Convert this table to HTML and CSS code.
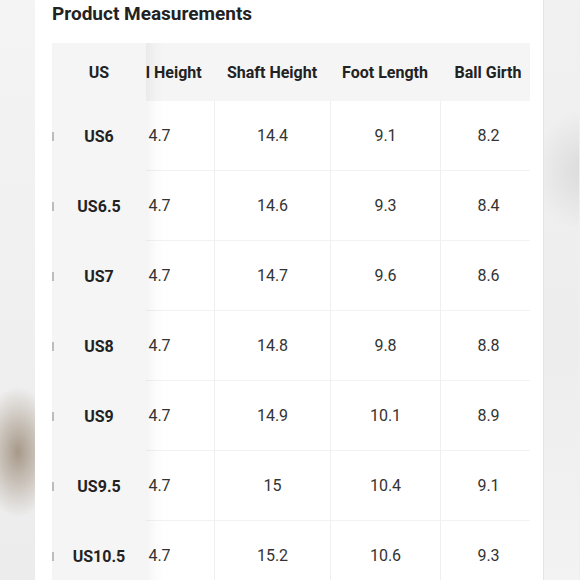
FILE: index.html
```html
<!DOCTYPE html>
<html>
<head>
<meta charset="utf-8">
<link rel="stylesheet" href="styles.css">
</head>
<body>
<div class="page">
  <div class="side side-left"></div>
  <div class="panel">
    <h2 class="title">Product Measurements</h2>
    <div class="table">
      <div class="cell head sticky">US</div>
      <div class="cell head heel"><span class="inner">Heel Height</span></div>
      <div class="cell head">Shaft Height</div>
      <div class="cell head">Foot Length</div>
      <div class="cell head ball">Ball Girth</div>

      <div class="cell sticky size">US6</div>
      <div class="cell heel"><span class="inner">4.7</span></div>
      <div class="cell line">14.4</div>
      <div class="cell line">9.1</div>
      <div class="cell line ball">8.2</div>

      <div class="cell sticky size">US6.5</div>
      <div class="cell heel"><span class="inner">4.7</span></div>
      <div class="cell line">14.6</div>
      <div class="cell line">9.3</div>
      <div class="cell line ball">8.4</div>

      <div class="cell sticky size">US7</div>
      <div class="cell heel"><span class="inner">4.7</span></div>
      <div class="cell line">14.7</div>
      <div class="cell line">9.6</div>
      <div class="cell line ball">8.6</div>

      <div class="cell sticky size">US8</div>
      <div class="cell heel"><span class="inner">4.7</span></div>
      <div class="cell line">14.8</div>
      <div class="cell line">9.8</div>
      <div class="cell line ball">8.8</div>

      <div class="cell sticky size">US9</div>
      <div class="cell heel"><span class="inner">4.7</span></div>
      <div class="cell line">14.9</div>
      <div class="cell line">10.1</div>
      <div class="cell line ball">8.9</div>

      <div class="cell sticky size">US9.5</div>
      <div class="cell heel"><span class="inner">4.7</span></div>
      <div class="cell line">15</div>
      <div class="cell line">10.4</div>
      <div class="cell line ball">9.1</div>

      <div class="cell sticky size">US10.5</div>
      <div class="cell heel"><span class="inner">4.7</span></div>
      <div class="cell line">15.2</div>
      <div class="cell line">10.6</div>
      <div class="cell line ball">9.3</div>
    </div>
  </div>
  <div class="side side-right"></div>
</div>
</body>
</html>
```

FILE: styles.css
```css
html, body {
  margin: 0;
  padding: 0;
}
body {
  width: 580px;
  height: 580px;
  overflow: hidden;
  font-family: Roboto, "Liberation Sans", sans-serif;
  background: #efefef;
}
.page {
  display: flex;
  width: 580px;
  height: 580px;
}
.side {
  width: 35px;
  flex: none;
}
.side-left {
  background:
    radial-gradient(ellipse 38px 65px at 18px 452px, rgba(150,132,112,0.8), rgba(150,132,112,0) 100%),
    linear-gradient(to bottom, #f4f4f4 0%, #f0f0f0 50%, #ececec 100%);
}
.side-right {
  background:
    radial-gradient(ellipse 50px 60px at 40px 170px, rgba(205,205,205,0.6), rgba(205,205,205,0) 100%),
    linear-gradient(to bottom, #f1f1f1 0%, #ededed 60%, #f3f3f3 100%);
}
.panel {
  width: 509px;
  flex: none;
  background: #fff;
  border-right: 1px solid #e4e4e4;
  padding-left: 17px;
  box-sizing: border-box;
}
.title {
  margin: 0;
  height: 43px;
  padding-top: 2px;
  box-sizing: border-box;
  font-size: 19px;
  font-weight: 700;
  color: #222;
  line-height: 24px;
}
.table {
  display: grid;
  grid-template-columns: 94px 68px 116px 110px 90px;
  grid-auto-rows: 70px;
  grid-template-rows: 58px;
}
.cell {
  display: flex;
  align-items: center;
  justify-content: center;
  font-size: 16px;
  color: #333;
  border-bottom: 1px solid #f2f2f2;
  box-sizing: border-box;
}
.cell.line {
  border-left: 1px solid #efefef;
}
.cell.ball {
  padding-left: 6px;
}
.cell.head {
  background: #f5f5f5;
  font-weight: 700;
  color: #222;
  border-bottom: none;
}
.heel {
  overflow: hidden;
  justify-content: flex-start;
}
.heel .inner {
  flex: none;
  width: 107px;
  margin-left: -40px;
  text-align: center;
}
.sticky {
  position: relative;
  z-index: 2;
  background: #f5f5f5;
  border-bottom: none;
}
.sticky::after {
  content: "";
  position: absolute;
  left: 100%;
  top: 0;
  bottom: 0;
  width: 18px;
  background: linear-gradient(to right, rgba(0,0,0,0.045), rgba(0,0,0,0.015) 50%, rgba(0,0,0,0));
}
.size {
  font-weight: 700;
  color: #222;
}
.size::before {
  content: "";
  position: absolute;
  left: 0;
  top: 31px;
  width: 2px;
  height: 9px;
  background: #bdbdbd;
}
```
